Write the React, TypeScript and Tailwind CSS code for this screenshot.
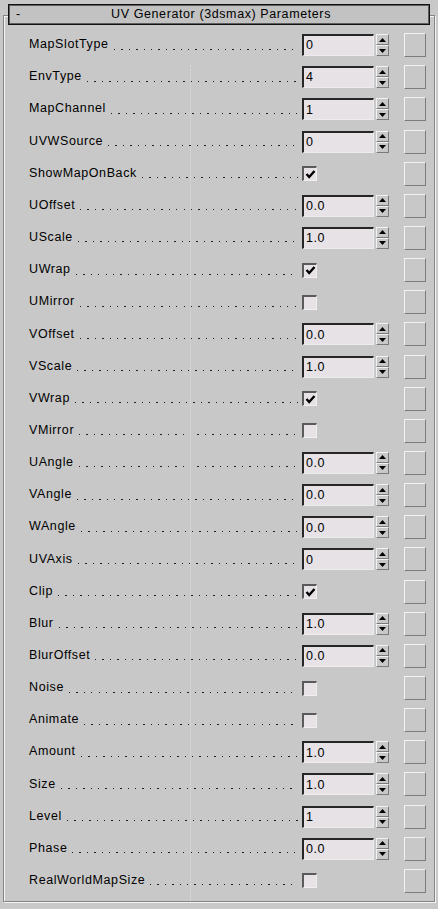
import React from 'react';

type Param = { name: string; kind: 'num' | 'check'; value: string | boolean };

const params: Param[] = [
  { name: 'MapSlotType', kind: 'num', value: '0' },
  { name: 'EnvType', kind: 'num', value: '4' },
  { name: 'MapChannel', kind: 'num', value: '1' },
  { name: 'UVWSource', kind: 'num', value: '0' },
  { name: 'ShowMapOnBack', kind: 'check', value: true },
  { name: 'UOffset', kind: 'num', value: '0.0' },
  { name: 'UScale', kind: 'num', value: '1.0' },
  { name: 'UWrap', kind: 'check', value: true },
  { name: 'UMirror', kind: 'check', value: false },
  { name: 'VOffset', kind: 'num', value: '0.0' },
  { name: 'VScale', kind: 'num', value: '1.0' },
  { name: 'VWrap', kind: 'check', value: true },
  { name: 'VMirror', kind: 'check', value: false },
  { name: 'UAngle', kind: 'num', value: '0.0' },
  { name: 'VAngle', kind: 'num', value: '0.0' },
  { name: 'WAngle', kind: 'num', value: '0.0' },
  { name: 'UVAxis', kind: 'num', value: '0' },
  { name: 'Clip', kind: 'check', value: true },
  { name: 'Blur', kind: 'num', value: '1.0' },
  { name: 'BlurOffset', kind: 'num', value: '0.0' },
  { name: 'Noise', kind: 'check', value: false },
  { name: 'Animate', kind: 'check', value: false },
  { name: 'Amount', kind: 'num', value: '1.0' },
  { name: 'Size', kind: 'num', value: '1.0' },
  { name: 'Level', kind: 'num', value: '1' },
  { name: 'Phase', kind: 'num', value: '0.0' },
  { name: 'RealWorldMapSize', kind: 'check', value: false },
];

const Spinner: React.FC = () => (
  <div className="ml-[2px] w-[13px] h-[22px] flex flex-col">
    <div className="h-[11px] flex items-center justify-center border-t border-l border-[#f2f2f2] border-r border-b border-r-[#7a7a7a] border-b-[#7a7a7a] bg-[#c8c8c8]">
      <svg width="7" height="4" viewBox="0 0 7 4">
        <polygon points="3.5,0 7,4 0,4" fill="#000" />
      </svg>
    </div>
    <div className="h-[11px] flex items-center justify-center border-t border-l border-[#f2f2f2] border-r border-b border-r-[#7a7a7a] border-b-[#7a7a7a] bg-[#c8c8c8]">
      <svg width="7" height="4" viewBox="0 0 7 4">
        <polygon points="0,0 7,0 3.5,4" fill="#000" />
      </svg>
    </div>
  </div>
);

const Row: React.FC<{ p: Param }> = ({ p }) => (
  <div className="flex items-center pl-[25px]">
    <div className="w-[271px] mr-[2px] flex items-center whitespace-nowrap">
      <span className="-mt-[1px]">{p.name}</span>
      {/* dotted leader */}
      <div className="flex-1 ml-[5px] mr-[2px] mt-[8px] h-[1px] bg-[repeating-linear-gradient(90deg,#1e1e1e_0_1.3px,transparent_1.3px_7.4px)]" />
    </div>
    <div className="w-[87px] flex items-center">
      {p.kind === 'num' ? (
        <>
          <div className="w-[72px] h-[22px] bg-[#e6e2e6] border-t-2 border-l-2 border-[#262626] border-r border-b border-r-[#ececec] border-b-[#ececec] pl-[2px] flex items-center leading-none">
            {p.value as string}
          </div>
          <Spinner />
        </>
      ) : (
        <div className="w-[15px] h-[15px] bg-[#e6e2e6] border-t-2 border-l-2 border-[#5a5a5a] border-r border-b border-r-[#f0f0f0] border-b-[#f0f0f0] flex items-center justify-center">
          {p.value && (
            <svg width="11" height="11" viewBox="0 0 11 11">
              <polyline points="1.5,5 4.2,8 9.5,2" fill="none" stroke="#000" strokeWidth="2.4" />
            </svg>
          )}
        </div>
      )}
    </div>
    <div className="ml-[15px] w-[22px] h-[24px] bg-[#c8c8c8] border-t border-l border-[#f2f2f2] border-r border-b border-r-[#7c7c7c] border-b-[#7c7c7c]" />
  </div>
);

const App: React.FC = () => {
  return (
    <div className="relative w-[438px] h-[909px] overflow-hidden bg-[#c8c8c8] pt-[4px] font-['Liberation_Sans',Arial,sans-serif] text-[12.5px] tracking-[0.6px] text-black">
      {/* rollout title bar */}
      <div className="relative z-10 mx-[8px] h-[21px] border border-[#111] bg-[#c2c2c2] shadow-[inset_1px_1px_0_#5e5e5e,inset_-1px_-1px_0_#5e5e5e] flex items-center">
        <span className="w-[20px] pl-[7px]">-</span>
        <span className="flex-1 text-center pr-[16px]">UV Generator (3dsmax) Parameters</span>
      </div>

      {/* group frame */}
      <div className="-mt-[10px] mx-[3px] h-[887px] border border-[#858585] shadow-[inset_1px_1px_0_#f4f4f4,1px_1px_0_#f4f4f4] pt-[13px]">
        <div className="h-[868px] grid grid-rows-[repeat(27,minmax(0,1fr))]">
          {params.map((p) => (
            <Row key={p.name} p={p} />
          ))}
        </div>
      </div>

      {/* faint guide line artifact */}
      <div className="pointer-events-none absolute left-[190px] top-[65px] bottom-[8px] border-l border-dotted border-[#d6dbe6]" />
    </div>
  );
};

export default App;
